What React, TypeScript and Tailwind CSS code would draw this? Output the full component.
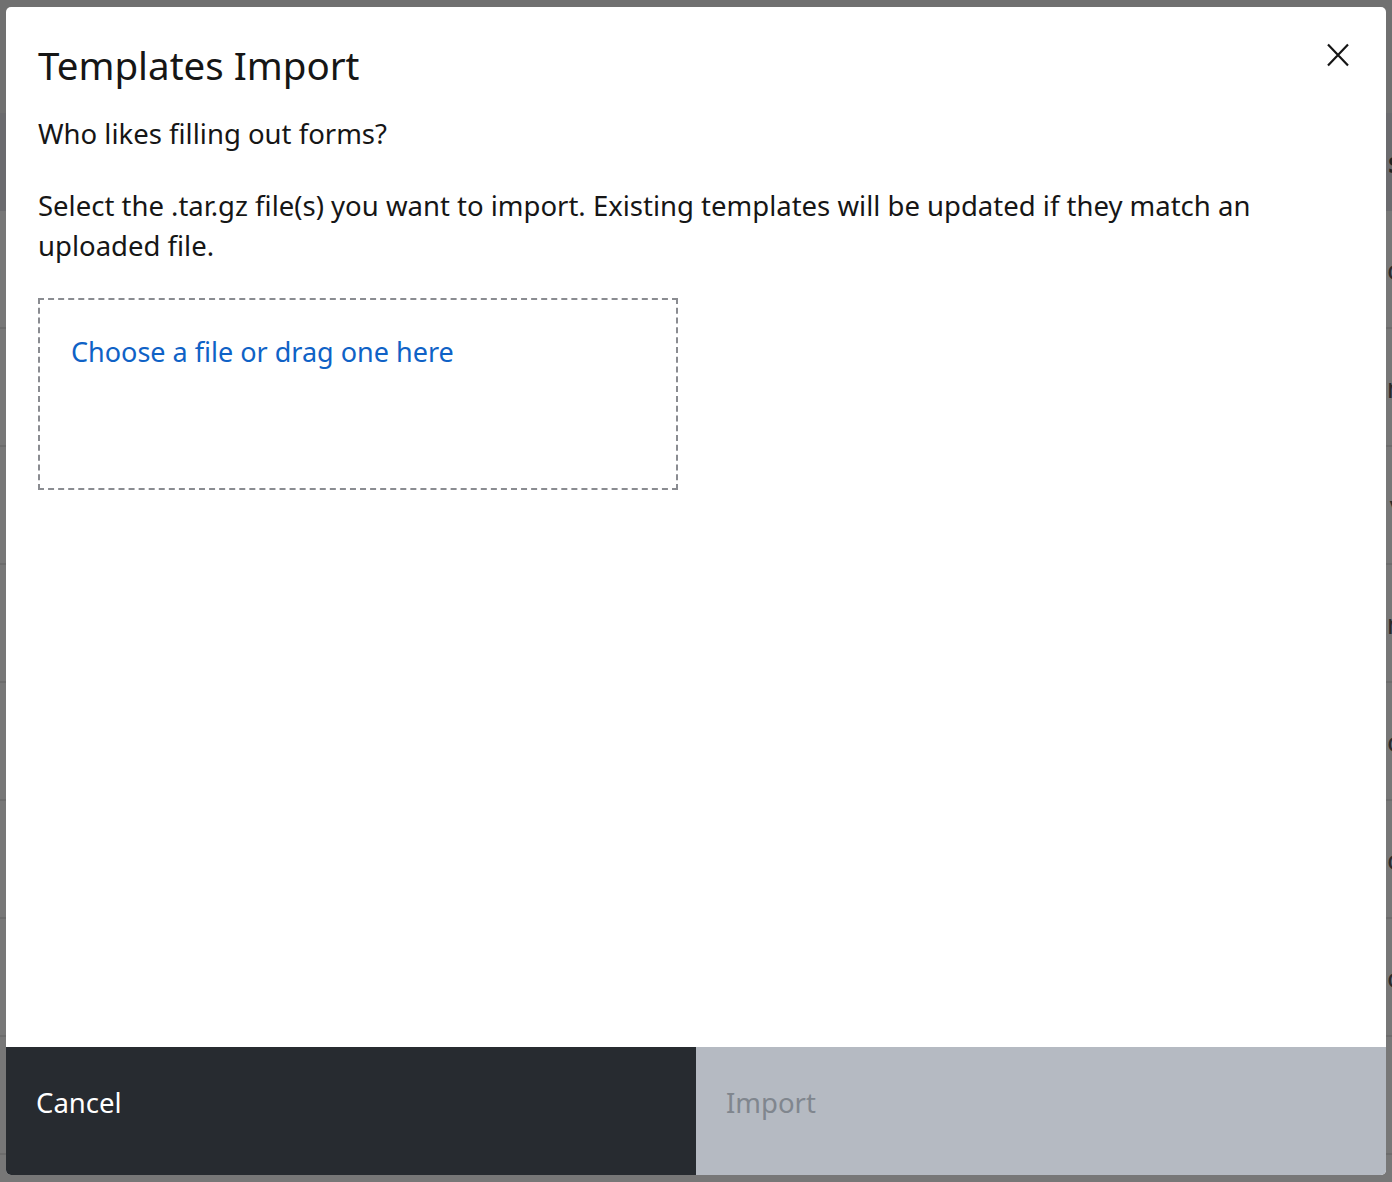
import React from "react";

const rows = [
  { left: "a", right: "o" },
  { left: "r", right: "n" },
  { left: "", right: "v" },
  { left: "l", right: "n" },
  { left: "", right: "o" },
  { left: "", right: "o" },
  { left: "", right: "o" },
  { left: "", right: "" },
];

const CloseIcon = () => (
  <svg width="24" height="24" viewBox="0 0 24 24" fill="none" aria-hidden="true">
    <path d="M2 1.5 L22 22.5 M22 1.5 L2 22.5" stroke="#161616" strokeWidth="2.2" />
  </svg>
);

export default function App() {
  return (
    <div
      className="relative h-[1182px] w-full overflow-hidden bg-[#777777]"
      style={{ fontFamily: "'Noto Sans', 'Open Sans', sans-serif" }}
    >
      {/* page behind the overlay */}
      <div className="flex flex-col">
        <div className="h-[113px] bg-[#707070]" />
        <div className="flex h-[98px] items-center justify-between bg-[#6b6b6e] text-[28px] font-bold text-[#222]">
          <span className="-ml-4">s</span>
          <span className="-mr-[10px]">s</span>
        </div>
        {rows.map((r, i) => (
          <div
            key={i}
            className="flex h-[118px] items-center justify-between border-b-2 border-[#6c6c6c] text-[28px] text-[#2a2a2a]"
          >
            <span className="-ml-[14px]">{r.left}</span>
            <span className="-mr-[12px]">{r.right}</span>
          </div>
        ))}
      </div>

      {/* modal */}
      <div className="absolute inset-0 flex items-center justify-center">
        <div className="relative flex h-[1168px] w-[1380px] flex-col overflow-hidden rounded-[5px] bg-white text-[#161616]">
          <button className="absolute right-[36px] top-[36px] flex h-6 w-6 items-center justify-center">
            <CloseIcon />
          </button>

          <div className="flex-1 px-8 pt-[30px]">
            <h2 className="text-[38.5px] leading-[56px]">Templates Import</h2>
            <p className="mt-[21px] text-[27.5px] leading-[40px]">Who likes filling out forms?</p>
            <p className="mt-[32px] text-[27.5px] leading-[40px]">
              Select the .tar.gz file(s) you want to import. Existing templates will be updated if they match an
              <br />
              uploaded file.
            </p>
            <div className="mt-[32px] h-[192px] w-[640px] border-2 border-dashed border-[#8a8c91] px-[31px] pt-[32px]">
              <span className="text-[27px] leading-[40px] text-[#0f62c6]">Choose a file or drag one here</span>
            </div>
          </div>

          <div className="grid h-[128px] grid-cols-2">
            <button className="flex items-start bg-[#272b30] px-[30px] pt-[36px] text-left">
              <span className="block text-[27.5px] leading-[40px] text-white">Cancel</span>
            </button>
            <button disabled className="flex items-start bg-[#b5bac2] px-[30px] pt-[36px] text-left">
              <span className="block text-[27.5px] leading-[40px] text-[#80868e]">Import</span>
            </button>
          </div>
        </div>
      </div>
    </div>
  );
}
